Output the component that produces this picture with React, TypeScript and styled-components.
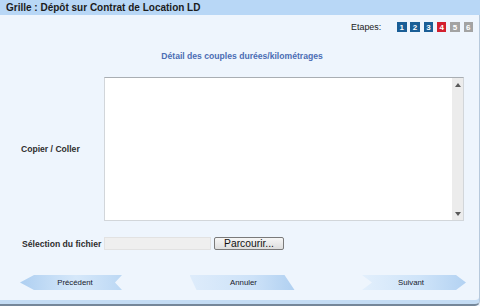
import React from "react";
import styled, { createGlobalStyle } from "styled-components";

const Global = createGlobalStyle`
  html, body { margin: 0; padding: 0; background: #eef5fd; }
  body { font-family: "Liberation Sans", Arial, sans-serif; }
  * { box-sizing: border-box; }
`;

const Page = styled.div`
  width: 480px;
  height: 306px;
  display: flex;
  flex-direction: column;
  overflow: hidden;
`;

const Header = styled.div`
  height: 15px;
  line-height: 15px;
  background: #b8d7f6;
  padding-left: 6px;
  font-size: 10px;
  font-weight: bold;
  color: #1c1c1c;
  white-space: nowrap;
`;

const Body = styled.div`
  flex: 1;
  display: flex;
  flex-direction: column;
  background: #eef5fd;
  border-right: 1px solid #b7c9dc;
  border-bottom: 2px solid #75879a;
  border-bottom-right-radius: 5px;
  box-shadow: inset 0 -4px 0 #c4dcf4;
`;

const StepsRow = styled.div`
  display: flex;
  align-items: center;
  justify-content: flex-end;
  margin-top: 7px;
  height: 10px;
  padding-right: 6px;
`;

const StepsLabel = styled.span`
  font-size: 8.9px;
  color: #222;
  margin-right: 12px;
`;

const Step = styled.span<{ $tone: "done" | "current" | "todo" }>`
  width: 9.5px;
  height: 10px;
  margin-left: 3.8px;
  display: flex;
  align-items: center;
  justify-content: center;
  font-size: 8px;
  font-weight: bold;
  color: #fff;
  background: ${(p) =>
    p.$tone === "done" ? "#1a5e96" : p.$tone === "current" ? "#d3202f" : "#a3a3a3"};
`;

const Title = styled.div`
  margin-top: 18px;
  height: 12px;
  line-height: 12px;
  text-align: center;
  font-size: 8.6px;
  font-weight: bold;
  color: #4b6db4;
  padding-left: 5px;
`;

const FormGrid = styled.div`
  display: grid;
  grid-template-columns: 104px 360px;
  row-gap: 16px;
  margin-top: 15px;
`;

const Label = styled.div<{ $indent?: number }>`
  display: flex;
  align-items: center;
  padding-left: ${(p) => p.$indent ?? 21}px;
  font-size: 8.6px;
  font-weight: bold;
  color: #2e2e2e;
  white-space: nowrap;
`;

const TextBox = styled.div`
  height: 144px;
  display: flex;
  background: #fff;
  border: 1px solid #d2d6da;
  border-top-color: #a9aeb3;
`;

const Area = styled.textarea`
  flex: 1;
  border: none;
  outline: none;
  resize: none;
  background: #fff;
  padding: 2px;
  font-family: "Liberation Sans", Arial, sans-serif;
  font-size: 11px;
`;

const ScrollTrack = styled.div`
  width: 11px;
  background: #ececec;
  display: flex;
  flex-direction: column;
  justify-content: space-between;
  align-items: center;
  padding: 5px 0 4px;
`;

const FileRow = styled.div`
  display: flex;
  align-items: center;
  gap: 3px;
  height: 13px;
`;

const FileField = styled.input`
  width: 107px;
  height: 13px;
  border: 1px solid #e2e2e2;
  background: #efefef;
  padding: 0;
  outline: none;
`;

const BrowseButton = styled.button`
  width: 70px;
  height: 13px;
  padding: 0;
  border: 1px solid #7a7a7a;
  border-radius: 2px;
  background: linear-gradient(#f6f6f6, #dedede);
  font-family: "Liberation Sans", Arial, sans-serif;
  font-size: 10.3px;
  line-height: 11px;
  color: #111;
`;

const NavRow = styled.div`
  display: flex;
  justify-content: space-between;
  padding: 0 13px 0 20px;
  margin-top: 25px;
`;

const shapes = {
  prev: "polygon(0 50%, 14px 0, 100% 0, calc(100% - 7px) 50%, 100% 100%, 14px 100%)",
  cancel: "polygon(0 0, calc(100% - 10px) 0, 100% 100%, 7px 100%)",
  next: "polygon(0 0, calc(100% - 10px) 0, 100% 50%, calc(100% - 10px) 100%, 0 100%, 10px 50%)",
};

const gradients = {
  prev: "linear-gradient(to right, #aecff1 0%, #d6e8fa 55%, #bcd8f4 100%)",
  cancel: "linear-gradient(to right, #deecfb 0%, #cde2f8 60%, #b0d0f1 100%)",
  next: "linear-gradient(to right, #e2effc 0%, #cfe4f9 55%, #b3d2f2 100%)",
};

const pads = { prev: "0 0 0 8px", cancel: "0 0 0 3px", next: "0 6px 0 0" };

const NavButton = styled.button<{ $kind: "prev" | "cancel" | "next"; $w: number }>`
  width: ${(p) => p.$w}px;
  height: 15px;
  border: none;
  padding: ${(p) => pads[p.$kind]};
  clip-path: ${(p) => shapes[p.$kind]};
  background: ${(p) => gradients[p.$kind]};
  font-family: "Liberation Sans", Arial, sans-serif;
  font-size: 7.8px;
  color: #17202c;
  cursor: pointer;
`;

const Arrow = ({ up }: { up?: boolean }) => (
  <svg width="6" height="4" viewBox="0 0 6 4">
    <polygon points={up ? "3,0 6,4 0,4" : "0,0 6,0 3,4"} fill="#5a5a5a" />
  </svg>
);

export default function App() {
  return (
    <>
      <Global />
      <Page>
        <Header>Grille : Dépôt sur Contrat de Location LD</Header>
        <Body>
          <StepsRow>
            <StepsLabel>Etapes:</StepsLabel>
            <Step $tone="done">1</Step>
            <Step $tone="done">2</Step>
            <Step $tone="done">3</Step>
            <Step $tone="current">4</Step>
            <Step $tone="todo">5</Step>
            <Step $tone="todo">6</Step>
          </StepsRow>
          <Title>Détail des couples durées/kilométrages</Title>
          <FormGrid>
            <Label>Copier / Coller</Label>
            <TextBox>
              <Area />
              <ScrollTrack>
                <Arrow up />
                <Arrow />
              </ScrollTrack>
            </TextBox>
            <Label $indent={22}>Sélection du fichier</Label>
            <FileRow>
              <FileField readOnly />
              <BrowseButton>Parcourir...</BrowseButton>
            </FileRow>
          </FormGrid>
          <NavRow>
            <NavButton $kind="prev" $w={102}>Précédent</NavButton>
            <NavButton $kind="cancel" $w={105}>Annuler</NavButton>
            <NavButton $kind="next" $w={104}>Suivant</NavButton>
          </NavRow>
        </Body>
      </Page>
    </>
  );
}
